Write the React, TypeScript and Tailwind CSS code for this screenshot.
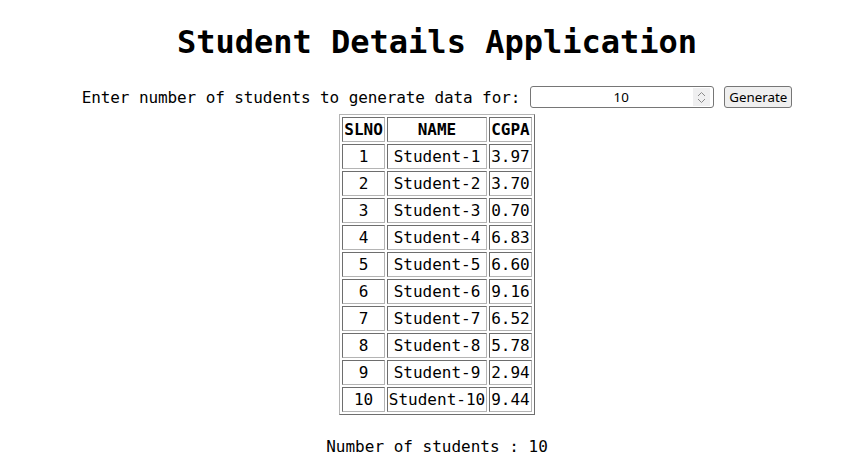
import { useState } from "react";

interface Student {
  slno: number;
  name: string;
  cgpa: string;
}

const initialData: Student[] = [
  "3.97",
  "3.70",
  "0.70",
  "6.83",
  "6.60",
  "9.16",
  "6.52",
  "5.78",
  "2.94",
  "9.44",
].map((cgpa, i) => ({ slno: i + 1, name: `Student-${i + 1}`, cgpa }));

const cell =
  "border border-t-[#6e6e6e] border-l-[#6e6e6e] border-b-[#b4b4b4] border-r-[#b4b4b4] p-[1px] leading-[21px] text-center";

export default function App() {
  const [count, setCount] = useState("10");
  const [students, setStudents] = useState<Student[]>(initialData);

  const handleGenerate = () => {
    const n = Math.max(0, parseInt(count) || 0);
    const rows: Student[] = [];
    for (let i = 1; i <= n; i++) {
      rows.push({
        slno: i,
        name: `Student-${i}`,
        cgpa: (Math.random() * 10).toFixed(2),
      });
    }
    setStudents(rows);
  };

  return (
    <div className="min-h-screen bg-white pl-[12px] text-black font-['DejaVu_Sans_Mono','Liberation_Mono',monospace] text-[16px]">
      <h1 className="pt-[21px] text-center text-[32px] font-bold leading-[42px]">
        Student Details Application
      </h1>

      <div className="mt-[22px] flex h-[24px] items-center justify-center">
        <label className="mr-[10px] leading-[21px] tracking-[-0.1px]">
          Enter number of students to generate data for:
        </label>
        <div className="flex h-[22px] w-[184px] items-center rounded-[3px] border border-[#767676] bg-white pr-[3px]">
          <input
            type="text"
            value={count}
            onChange={(e) => setCount(e.target.value)}
            className="h-full w-full min-w-0 bg-transparent pl-[18px] text-center font-['Noto_Sans',sans-serif] text-[13.33px] outline-none"
          />
          <div className="flex h-[18px] w-[17px] shrink-0 flex-col items-center justify-center bg-[#efeff0] text-[#8a8a8a]">
            <svg width="9" height="6" viewBox="0 0 9 6" fill="none" stroke="currentColor" strokeWidth="1">
              <path d="M1 5 L4.5 1.5 L8 5" />
            </svg>
            <svg width="9" height="6" viewBox="0 0 9 6" fill="none" stroke="currentColor" strokeWidth="1" className="mt-[1px]">
              <path d="M1 1 L4.5 4.5 L8 1" />
            </svg>
          </div>
        </div>
        <button
          onClick={handleGenerate}
          className="ml-[10px] h-[22px] rounded-[3px] border border-[#767676] bg-[#efefef] px-[4px] font-['Noto_Sans',sans-serif] text-[13.33px] leading-[18px] text-black"
        >
          Generate
        </button>
      </div>

      <table className="mx-auto mt-[5px] border-separate border-spacing-[2px] border border-t-[#b4b4b4] border-l-[#b4b4b4] border-b-[#6e6e6e] border-r-[#6e6e6e]">
        <thead>
          <tr>
            <th className={`${cell} font-bold`}>SLNO</th>
            <th className={`${cell} font-bold`}>NAME</th>
            <th className={`${cell} font-bold`}>CGPA</th>
          </tr>
        </thead>
        <tbody>
          {students.map((s) => (
            <tr key={s.slno}>
              <td className={cell}>{s.slno}</td>
              <td className={cell}>{s.name}</td>
              <td className={cell}>{s.cgpa}</td>
            </tr>
          ))}
        </tbody>
      </table>

      <p className="mt-[21px] text-center leading-[21px]">
        Number of students : {students.length}
      </p>
    </div>
  );
}
